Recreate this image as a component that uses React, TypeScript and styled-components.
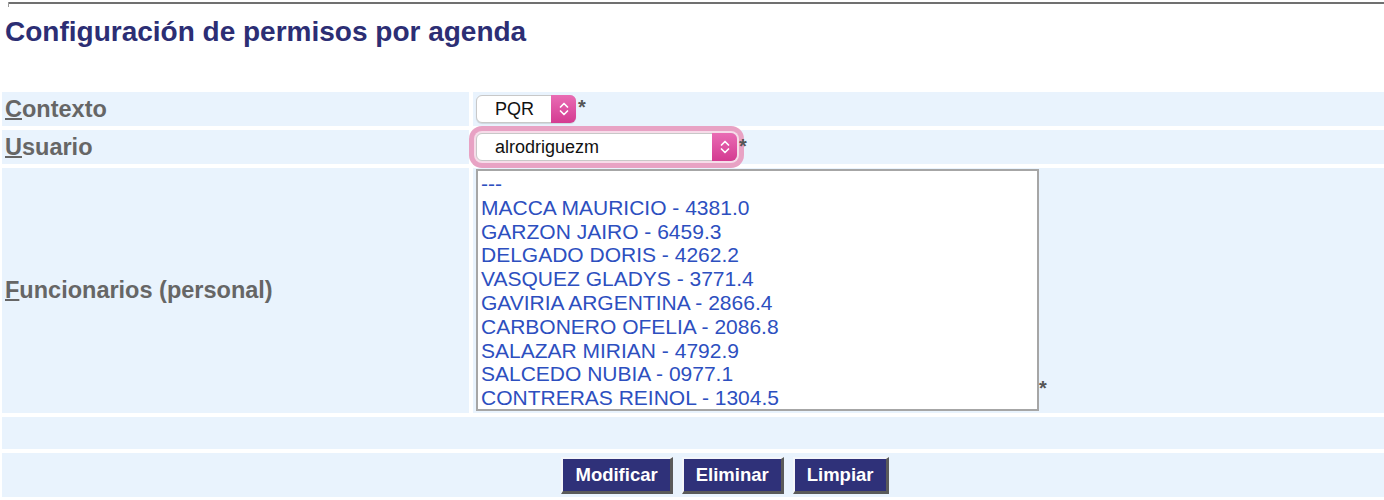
import React from "react";
import styled, { createGlobalStyle } from "styled-components";

const GlobalStyle = createGlobalStyle`
  html, body {
    margin: 0;
    padding: 0;
    background: #ffffff;
    overflow: hidden;
    font-family: "Liberation Sans", Arial, sans-serif;
  }
`;

const Frame = styled.div`
  margin-left: 8px;
  height: 5px;
  border-left: 1px solid #9a9a9a;
`;

const FrameLine = styled.div`
  margin-top: 2px;
  border-top: 2px solid #707070;
`;

const Title = styled.h2`
  margin: 9px 0 0 5px;
  font-size: 28px;
  line-height: 32px;
  font-weight: bold;
  color: #2c2e74;
`;

const Form = styled.div`
  display: grid;
  grid-template-columns: 467px 1fr;
  grid-template-rows: 34px 34px auto 32px 44px;
  gap: 4px;
  width: 1446px;
  margin: 44px 0 0 2px;
`;

const LabelCell = styled.div`
  display: flex;
  align-items: center;
  padding-left: 3px;
  background: #e9f3fd;
  font-size: 23.5px;
  font-weight: bold;
  color: #666666;

  u {
    text-decoration-thickness: 2px;
  }
`;

const ValueCell = styled.div<{ $align?: string }>`
  display: flex;
  align-items: ${(p) => p.$align || "center"};
  padding: ${(p) => (p.$align === "flex-start" ? "1px 0 2px 3px" : "0 0 0 3px")};
  background: #e9f3fd;
`;

const WideCell = styled.div`
  grid-column: 1 / span 2;
  display: flex;
  align-items: center;
  justify-content: center;
  gap: 9px;
  background: #e9f3fd;
`;

const Field = styled.div`
  display: flex;
  align-items: flex-start;
`;

const Star = styled.span<{ $top: number; $left?: number }>`
  margin-top: ${(p) => p.$top}px;
  margin-left: ${(p) => p.$left ?? 2}px;
  font-size: 20px;
  line-height: 20px;
  font-weight: bold;
  color: #555555;
`;

const SelectBox = styled.div<{ $width: number; $focused?: boolean }>`
  display: flex;
  width: ${(p) => p.$width}px;
  height: 28px;
  box-sizing: border-box;
  border: 1px solid #c8c8c8;
  border-radius: 6px;
  background: #ffffff;
  box-shadow: ${(p) =>
    p.$focused
      ? "0 0 0 2px #f6dce9, 0 0 0 7px #e8a2c4"
      : "0 1px 1px rgba(0, 0, 0, 0.12)"};
`;

const SelectValue = styled.span`
  flex: 1;
  padding-left: 18px;
  font-size: 18px;
  line-height: 26px;
  color: #111111;
`;

const SelectArrow = styled.span`
  display: flex;
  align-items: center;
  justify-content: center;
  width: 25px;
  margin: -1px -1px -1px 0;
  border-radius: 0 6px 6px 0;
  background: linear-gradient(#e96cb4, #d43b91);
`;

const ListBox = styled.div`
  width: 563px;
  height: 242px;
  box-sizing: border-box;
  border: 2px solid #a6a6a6;
  background: #ffffff;
  padding: 1px 3px 0;
  overflow: hidden;
`;

const Option = styled.div`
  font-size: 21px;
  line-height: 23.8px;
  color: #2d4fbf;
  white-space: nowrap;
`;

const Button = styled.button`
  height: 37px;
  padding: 0 12px;
  border: 2px solid;
  border-right-width: 3px;
  border-bottom-width: 3px;
  border-color: #f4f6fa #5a5a5a #5a5a5a #f4f6fa;
  background: #2f3179;
  color: #ffffff;
  font-family: "Liberation Sans", Arial, sans-serif;
  font-size: 18.5px;
  font-weight: bold;
`;

function Chevrons() {
  return (
    <svg width="12" height="18" viewBox="0 0 12 18" fill="none">
      <path d="M2.5 7 L6 3.5 L9.5 7" stroke="#fff" strokeWidth="1.7" strokeLinecap="round" strokeLinejoin="round" />
      <path d="M2.5 11 L6 14.5 L9.5 11" stroke="#fff" strokeWidth="1.7" strokeLinecap="round" strokeLinejoin="round" />
    </svg>
  );
}

type SelectProps = {
  value: string;
  width: number;
  focused?: boolean;
};

function Select({ value, width, focused }: SelectProps) {
  return (
    <SelectBox $width={width} $focused={focused}>
      <SelectValue>{value}</SelectValue>
      <SelectArrow>
        <Chevrons />
      </SelectArrow>
    </SelectBox>
  );
}

const funcionarios = [
  "---",
  "MACCA MAURICIO - 4381.0",
  "GARZON JAIRO - 6459.3",
  "DELGADO DORIS - 4262.2",
  "VASQUEZ GLADYS - 3771.4",
  "GAVIRIA ARGENTINA - 2866.4",
  "CARBONERO OFELIA - 2086.8",
  "SALAZAR MIRIAN - 4792.9",
  "SALCEDO NUBIA - 0977.1",
  "CONTRERAS REINOL - 1304.5",
];

export default function App() {
  return (
    <>
      <GlobalStyle />
      <Frame>
        <FrameLine />
      </Frame>
      <Title>Configuración de permisos por agenda</Title>
      <Form>
        <LabelCell>
          <span>
            <u>C</u>ontexto
          </span>
        </LabelCell>
        <ValueCell>
          <Field>
            <Select value="PQR" width={100} />
            <Star $top={2}>*</Star>
          </Field>
        </ValueCell>

        <LabelCell>
          <span>
            <u>U</u>suario
          </span>
        </LabelCell>
        <ValueCell>
          <Field>
            <Select value="alrodriguezm" width={261} focused />
            <Star $top={3}>*</Star>
          </Field>
        </ValueCell>

        <LabelCell>
          <span>
            <u>F</u>uncionarios (personal)
          </span>
        </LabelCell>
        <ValueCell $align="flex-start">
          <Field>
            <ListBox>
              {funcionarios.map((f) => (
                <Option key={f}>{f}</Option>
              ))}
            </ListBox>
            <Star $top={209} $left={0}>
              *
            </Star>
          </Field>
        </ValueCell>

        <WideCell />

        <WideCell>
          <Button>Modificar</Button>
          <Button>Eliminar</Button>
          <Button>Limpiar</Button>
        </WideCell>
      </Form>
    </>
  );
}
